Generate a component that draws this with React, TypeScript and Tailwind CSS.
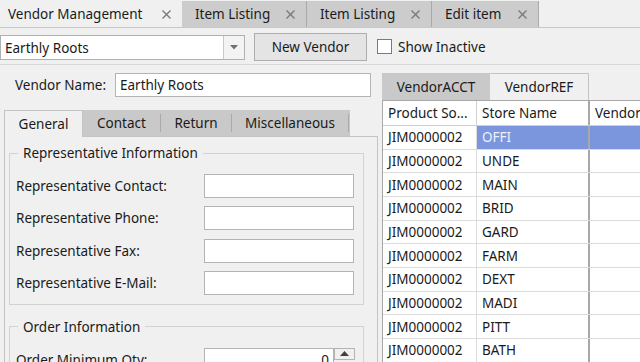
import React from "react";

const XIcon = () => (
  <svg width="11" height="11" viewBox="0 0 11 11" className="shrink-0">
    <path d="M1.5 1.5 L9.5 9.5 M9.5 1.5 L1.5 9.5" stroke="#7a7a7a" strokeWidth="1.4" />
  </svg>
);

const TopTab = ({ label, w, active, sep }: { label: string; w: string; active?: boolean; sep?: boolean }) => (
  <div
    className={`flex items-center h-full pr-[10px] ${w} ${active ? "bg-[#f0f0f0] pl-[8px]" : "bg-[#cccccc] pl-[13px]"} ${sep ? "border-r border-[#a9a9a9]" : ""}`}
  >
    <span className="flex-1 whitespace-nowrap">{label}</span>
    <XIcon />
  </div>
);

const Field = ({ label }: { label: string }) => (
  <div className="flex items-center h-[24px]">
    <span className="w-[188px] whitespace-nowrap">{label}</span>
    <div className="w-[150px] h-[24px] bg-white border border-[#b4b4b4]" />
  </div>
);

const rows = ["OFFI", "UNDE", "MAIN", "BRID", "GARD", "FARM", "DEXT", "MADI", "PITT", "BATH"];

export default function App() {
  return (
    <div className="w-[640px] h-[362px] overflow-hidden bg-[#f0f0f0] text-[13.5px] leading-[18px] text-[#1a1a1a] font-['Noto_Sans',sans-serif] flex flex-col">
      {/* top tabs */}
      <div className="h-[28px] shrink-0 flex items-end border-b border-[#c8c8c8] bg-[#f0f0f0]">
        <div className="flex h-[26px]">
          <TopTab label="Vendor Management" w="w-[182px]" active />
          <TopTab label="Item Listing" w="w-[125px]" sep />
          <TopTab label="Item Listing" w="w-[125px]" sep />
          <TopTab label="Edit item" w="w-[107px]" sep />
        </div>
      </div>
      {/* toolbar */}
      <div className="h-[37px] shrink-0 flex items-start pt-[7px] border-b border-[#d8d8d8]">
        <div className="flex w-[245px] h-[25px] bg-white border border-[#b0b0b0]">
          <span className="flex-1 pl-[4px] flex items-center">Earthly Roots</span>
          <div className="w-[21px] border-l border-[#c8c8c8] bg-[#f3f3f3] flex items-center justify-center">
            <svg width="8" height="5" viewBox="0 0 8 5">
              <path d="M0 0 L8 0 L4 4.5 Z" fill="#707070" />
            </svg>
          </div>
        </div>
        <button className="ml-[9px] -mt-[2px] w-[113px] h-[28px] bg-[#e4e4e4] border border-[#adadad] flex items-center justify-center">
          New Vendor
        </button>
        <div className="ml-[10px] mt-[4px] w-[15px] h-[15px] bg-white border border-[#7a7a7a]" />
        <span className="ml-[6px] mt-[3px]">Show Inactive</span>
      </div>
      {/* main */}
      <div className="flex flex-1 min-h-0">
        {/* left */}
        <div className="w-[380px] shrink-0 flex flex-col">
          <div className="flex items-center mt-[8px] h-[24px]">
            <span className="ml-[15px] w-[100px] whitespace-nowrap">Vendor Name:</span>
            <div className="w-[256px] h-[24px] bg-white border border-[#b4b4b4] pl-[4px] flex items-center">Earthly Roots</div>
          </div>
          <div className="mt-[13px] ml-[4px] flex h-[26px]">
            <div className="w-[79px] h-[27px] bg-[#f0f0f0] border border-b-0 border-[#c4c4c4] flex items-center justify-center relative z-10">General</div>
            <div className="flex bg-[#c9c9c9] h-[26px] w-[267px] items-center">
              <span className="w-[78px] text-center border-r border-[#a9a9a9]">Contact</span>
              <span className="w-[71px] text-center border-r border-[#a9a9a9]">Return</span>
              <span className="w-[117px] text-center border-r border-[#a9a9a9]">Miscellaneous</span>
            </div>
          </div>
          <div className="ml-[4px] w-[374px] flex-1 border border-b-0 border-[#c4c4c4] pl-[4px] pt-[7px]">
            <fieldset className="w-[355px] border border-[#d2d2d2] px-[6px] pb-[9px]">
              <legend className="ml-[2px] px-[5px] leading-[18px]">Representative Information</legend>
              <div className="flex flex-col gap-[8.33px] pt-[12px]">
                <Field label="Representative Contact:" />
                <Field label="Representative Phone:" />
                <Field label="Representative Fax:" />
                <Field label="Representative E-Mail:" />
              </div>
            </fieldset>
            <fieldset className="mt-[13px] w-[355px] border border-[#d2d2d2] px-[6px] pb-[8px]">
              <legend className="ml-[2px] px-[5px] leading-[18px]">Order Information</legend>
              <div className="flex items-center h-[24px] mt-[12px]">
                <span className="w-[188px] whitespace-nowrap">Order Minimum Qty:</span>
                <div className="flex w-[151px] h-[24px]">
                  <div className="w-[130px] bg-white border border-[#b4b4b4] flex items-center justify-end pr-[4px]">0</div>
                  <div className="w-[21px] h-[12px] border border-[#b4b4b4] bg-[#f0f0f0] flex items-center justify-center">
                    <svg width="9" height="5" viewBox="0 0 9 5">
                      <path d="M0 5 L9 5 L4.5 0 Z" fill="#404040" />
                    </svg>
                  </div>
                </div>
              </div>
            </fieldset>
          </div>
        </div>
        {/* right */}
        <div className="flex-1 flex flex-col pl-[2px] pt-[8px]">
          <div className="flex h-[27px]">
            <div className="w-[108px] bg-[#c9c9c9] flex items-center justify-center">VendorACCT</div>
            <div className="w-[99px] h-[27px] bg-[#f0f0f0] border-t border-r border-[#c4c4c4] flex items-center justify-center">VendorREF</div>
          </div>
          <div className="flex-1 border-l border-t border-[#a8a8a8] bg-white">
            <div className="flex h-[25px] border-b border-[#d0d0d0] bg-white">
              <div className="w-[94px] border-r border-[#d0d0d0] pl-[5px] flex items-center whitespace-nowrap">Product So...</div>
              <div className="w-[113px] border-r-2 border-[#a8a8a8] pl-[5px] flex items-center">Store Name</div>
              <div className="flex-1 pl-[5px] flex items-center whitespace-nowrap overflow-hidden">Vendor</div>
            </div>
            {rows.map((r, i) => (
              <div key={r} className="flex h-[23.67px] border-b border-[#dcdcdc]">
                <div className="w-[94px] border-r border-[#dcdcdc] pl-[5px] flex items-center">JIM0000002</div>
                <div className={`w-[113px] border-r-2 border-[#a8a8a8] pl-[5px] flex items-center ${i === 0 ? "bg-[#7b96dc] text-[#eef1fb]" : ""}`}>{r}</div>
                <div className={`flex-1 ${i === 0 ? "bg-[#7b96dc]" : ""}`} />
              </div>
            ))}
          </div>
        </div>
      </div>
    </div>
  );
}
